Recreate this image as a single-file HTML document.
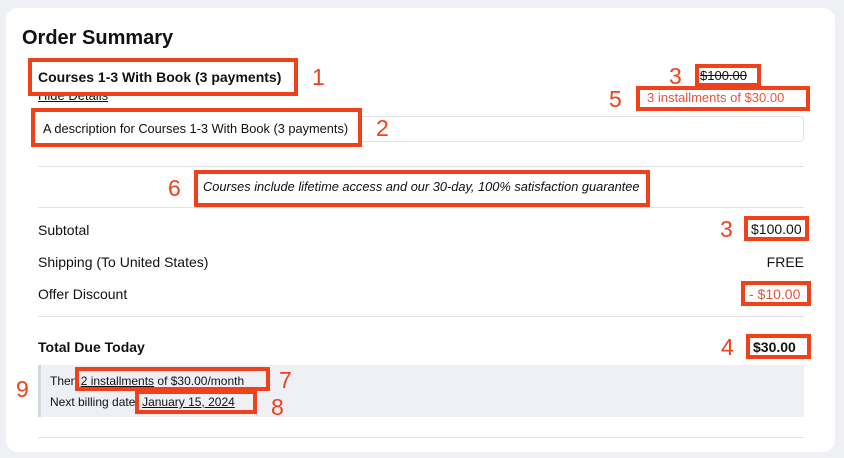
<!DOCTYPE html>
<html><head><meta charset="utf-8"><style>
*{margin:0;padding:0;box-sizing:border-box}
body{width:844px;height:458px;background:#eef0f4;font-family:"Liberation Sans",sans-serif;color:#111;position:relative;overflow:hidden}
.card{position:absolute;left:6px;top:8px;width:829px;height:444px;background:#fff;border-radius:12px}
.a{position:absolute;white-space:nowrap}
.box{position:absolute;border:4px solid #f0411a;background:#fff}
.n{position:absolute;color:#f0411a;font-size:23px;line-height:23px}
.line{position:absolute;left:38px;width:766px;height:1px;background:#e2e3e8}
.t{font-size:14px}
</style></head><body>
<div class="card"></div>
<div class="a" style="left:22px;top:27px;font-size:20px;font-weight:bold">Order Summary</div>

<div class="a t" style="left:38px;top:88px;font-size:13px;text-decoration:underline">Hide Details</div>
<div class="box" style="left:28px;top:58px;width:270px;height:38px"></div>
<div class="a" style="left:38px;top:69px;font-size:14px;font-weight:bold">Courses 1-3 With Book (3 payments)</div>
<div class="n" style="left:312px;top:66px">1</div>

<div class="box" style="left:695px;top:64px;width:66px;height:23px"></div>
<div class="a" style="left:700px;top:68px;font-size:13px;text-decoration:line-through">$100.00</div>
<div class="n" style="left:669px;top:65px">3</div>
<div class="box" style="left:636px;top:86px;width:174px;height:25px"></div>
<div class="a" style="left:647px;top:90px;font-size:13px;color:#e8533e">3 installments of $30.00</div>
<div class="n" style="left:609px;top:88px">5</div>

<div class="a" style="left:38px;top:116px;width:766px;height:26px;border:1px solid #e0e1e7;border-radius:4px"></div>
<div class="box" style="left:31px;top:108px;width:331px;height:39px"></div>
<div class="a" style="left:43px;top:121px;font-size:12.8px">A description for Courses 1-3 With Book (3 payments)</div>
<div class="n" style="left:376px;top:117px">2</div>

<div class="line" style="top:166px"></div>
<div class="line" style="top:207px"></div>
<div class="box" style="left:194px;top:170px;width:456px;height:37px"></div>
<div class="a" style="left:203px;top:179px;font-size:12.8px;font-style:italic">Courses include lifetime access and our 30-day, 100% satisfaction guarantee</div>
<div class="n" style="left:168px;top:177px">6</div>

<div class="a t" style="left:38px;top:222px">Subtotal</div>
<div class="box" style="left:744px;top:216px;width:65px;height:25px"></div>
<div class="a t" style="left:751px;top:221px">$100.00</div>
<div class="n" style="left:720px;top:218px">3</div>

<div class="a t" style="left:38px;top:254px">Shipping (To United States)</div>
<div class="a t" style="right:40px;top:254px">FREE</div>

<div class="a t" style="left:38px;top:286px">Offer Discount</div>
<div class="box" style="left:741px;top:281px;width:70px;height:25px"></div>
<div class="a t" style="left:749px;top:286px;color:#e8533e">- $10.00</div>

<div class="line" style="top:316px"></div>

<div class="a t" style="left:38px;top:339px;font-weight:bold">Total Due Today</div>
<div class="box" style="left:746px;top:334px;width:65px;height:25px"></div>
<div class="a t" style="left:753px;top:339px;font-weight:bold">$30.00</div>
<div class="n" style="left:721px;top:336px">4</div>

<div class="a" style="left:38px;top:365px;width:766px;height:52px;background:#eef0f5;border-left:3px solid #d4d7de"></div>
<div class="a" style="left:50px;top:374px;font-size:12px">Then <u>2 installments</u> of $30.00/month</div>
<div class="a" style="left:50px;top:395px;font-size:12px">Next billing date: <u>January 15, 2024</u></div>
<div class="box" style="left:75px;top:367px;width:195px;height:24px;background:transparent"></div>
<div class="box" style="left:135px;top:390px;width:122px;height:24px;background:transparent"></div>
<div class="n" style="left:279px;top:369px">7</div>
<div class="n" style="left:271px;top:396px">8</div>
<div class="n" style="left:16px;top:378px">9</div>

<div class="line" style="top:437px"></div>
</body></html>
